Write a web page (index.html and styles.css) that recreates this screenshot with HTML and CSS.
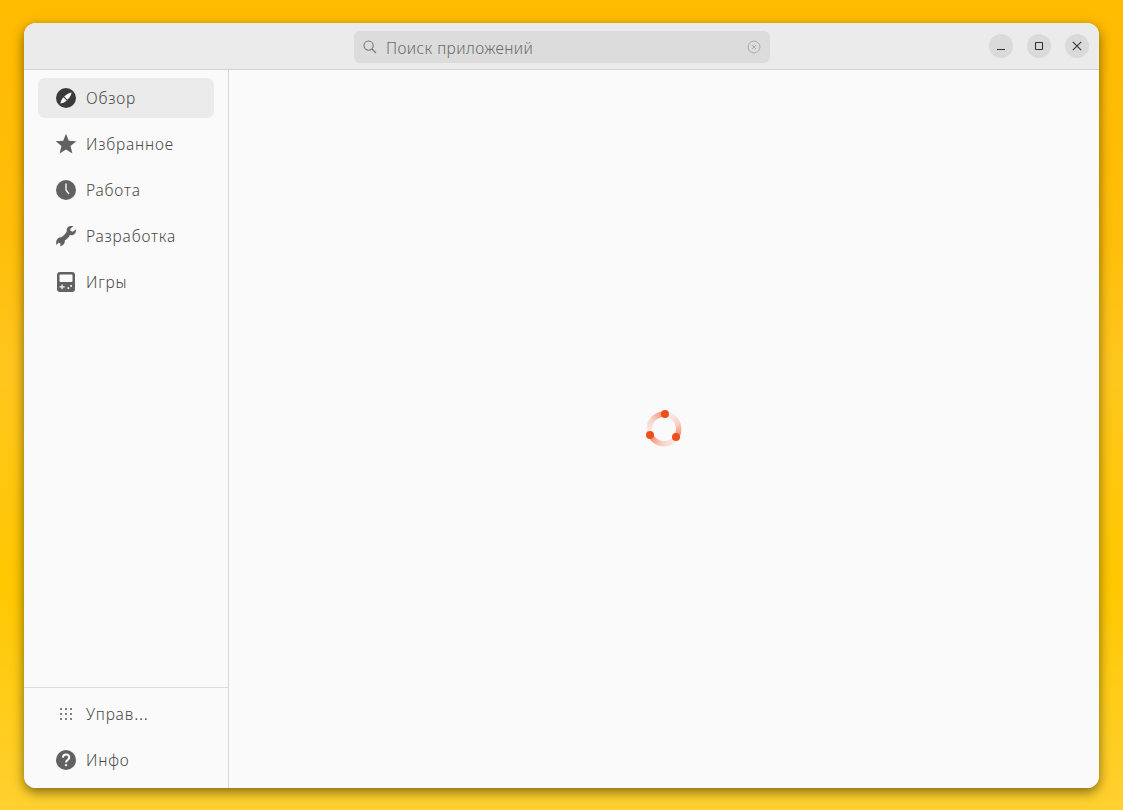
FILE: index.html
```html
<!DOCTYPE html>
<html lang="ru">
<head>
<meta charset="utf-8">
<title>Приложения</title>
<link rel="stylesheet" href="styles.css">
</head>
<body>
<div class="window">
  <header class="titlebar">
    <div class="search">
      <svg class="search-icon" viewBox="0 0 14 14"><circle cx="5.6" cy="5.6" r="4.6"/><path d="M9 9l4 4"/></svg>
      <span class="search-text">Поиск приложений</span>
      <svg class="search-clear" viewBox="0 0 14 14"><circle cx="7" cy="7" r="6"/><path d="M5 5l4 4M9 5l-4 4"/></svg>
    </div>
    <div class="controls">
      <button class="ctl"><svg viewBox="0 0 10 10"><path d="M1 8.5h8"/></svg></button>
      <button class="ctl"><svg viewBox="0 0 10 10"><rect x="1.5" y="1.5" width="7" height="7" rx="0.5"/></svg></button>
      <button class="ctl"><svg viewBox="0 0 10 10"><path d="M.8.8l8.4 8.4M9.2.8L.8 9.2"/></svg></button>
    </div>
  </header>
  <div class="body">
    <aside class="sidebar">
      <nav class="nav">
        <a class="item active">
          <svg class="icon" viewBox="0 0 20 20"><circle class="dark" cx="10" cy="10" r="10"/><path class="cut" d="M15.600 4.400C15 7.500 13.600 9.800 11.400 11.800L8.200 8.600C10.200 6.400 12.500 5 15.600 4.400Z"/><path class="cut" d="M4.400 15.600C5 12.500 6 10.800 7.500 9.300L10.700 12.500C9.200 14 7.500 15 4.400 15.600Z"/></svg>
          <span>Обзор</span>
        </a>
        <a class="item">
          <svg class="icon" viewBox="0 0 20 20"><path class="fill" d="M10 -.3l2.800 7 7.500.5-5.800 4.800 1.900 7.400L10 15.400l-6.400 4 1.900-7.400L-.3 7.200l7.500-.5z"/></svg>
          <span>Избранное</span>
        </a>
        <a class="item">
          <svg class="icon" viewBox="0 0 20 20"><circle class="fill" cx="10" cy="10" r="10"/><path class="hand" d="M10 3.500v6.500l3 4"/></svg>
          <span>Работа</span>
        </a>
        <a class="item">
          <svg class="icon" viewBox="0 0 20 20"><path class="fill" d="M15 0C12 0 10.200 2.500 10.800 5.300C9.800 7.600 7.800 9.700 5.200 11.200C2.500 11 .4 13.300 .2 16.200L.2 19L2.800 16.800L4.600 17.700L4 20.300C6.800 20 9.200 17.700 8.800 14.600C11.300 13.200 12.800 11.400 13.900 9.100C17.100 9.800 20 7.800 20 4.500L20 3.200L16.800 5.800L14.300 4.800L14.500 2.500L17.500 .3C16.800 .1 15.900 0 15 0Z"/></svg>
          <span>Разработка</span>
        </a>
        <a class="item">
          <svg class="icon" viewBox="0 0 20 20"><rect class="fill" x="1" y="0" width="18" height="20" rx="3"/><rect class="cut" x="3.500" y="2.500" width="13" height="7.500" rx="1"/><path class="cut" d="M3.500 14.300h2V12.500h1.200v1.800h2v1.200h-2v1.800H5.500v-1.800h-2zM11.500 15.300h1.700v1.700h-1.700zM14.300 13h1.700v1.700h-1.700z"/></svg>
          <span>Игры</span>
        </a>
      </nav>
      <div class="bottom">
        <a class="item">
          <svg class="icon" viewBox="0 0 20 20"><g class="muted"><rect x="4" y="4" width="2" height="2"/><rect x="9" y="4" width="2" height="2"/><rect x="14" y="4" width="2" height="2"/><rect x="4" y="9" width="2" height="2"/><rect x="9" y="9" width="2" height="2"/><rect x="14" y="9" width="2" height="2"/><rect x="4" y="14" width="2" height="2"/><rect x="9" y="14" width="2" height="2"/><rect x="14" y="14" width="2" height="2"/></g></svg>
          <span>Управ<span class="ell">…</span></span>
        </a>
        <a class="item">
          <svg class="icon" viewBox="0 0 20 20"><circle class="fill" cx="10" cy="10" r="10"/><path class="hand thick" d="M6.900 7.600C7 5.700 8.300 4.600 10.100 4.600c1.800 0 3.100 1.100 3.100 2.800 0 2.600-3.200 2.500-3.200 5.100"/><rect class="cut" x="8.800" y="13.900" width="2.400" height="2.400" rx="1.200"/></svg>
          <span>Инфо</span>
        </a>
      </div>
    </aside>
    <main class="content">
      <div class="spinner">
        <div class="ring"></div>
        <i class="dot dot-a"></i>
        <i class="dot dot-b"></i>
        <i class="dot dot-c"></i>
      </div>
    </main>
  </div>
</div>
</body>
</html>
```

FILE: styles.css
```css
* { box-sizing: border-box; }
html, body { height: 100%; }
body {
  margin: 0;
  padding: 23px 24px 22px;
  background: linear-gradient(180deg, #ffbb00 0%, #ffbe0a 30%, #ffc61e 45%, #ffc800 72%, #ffd030 100%);
  font-family: "Noto Sans", "Open Sans", sans-serif;
  overflow: hidden;
}
.window {
  height: 100%;
  display: flex;
  flex-direction: column;
  border-radius: 12px;
  overflow: hidden;
  background: #fafafa;
  box-shadow: 0 4px 12px rgba(0, 0, 0, .5);
}
.titlebar {
  flex: 0 0 47px;
  position: relative;
  display: flex;
  align-items: center;
  justify-content: flex-end;
  padding: 0 10px 1px 0;
  background: #ebebeb;
  border-bottom: 1px solid #d2d2d2;
}
.search {
  position: absolute;
  left: 330px;
  top: 8px;
  width: 416px;
  height: 32px;
  display: flex;
  align-items: center;
  padding: 0 9px;
  border-radius: 6px;
  background: #dcdcdc;
}
.search-icon { width: 14px; height: 14px; fill: none; stroke: #777; stroke-width: 1.1; }
.search-text { margin-left: 9px; padding-top: 1px; flex: 1; color: #6a6a6a; font-size: 15.5px; font-weight: 300; letter-spacing: .42px; }
.search-clear { width: 14px; height: 14px; fill: none; stroke: #aaa; stroke-width: 1; }
.controls { display: flex; gap: 14px; }
.ctl {
  width: 24px;
  height: 24px;
  padding: 0;
  border: 0;
  border-radius: 50%;
  background: #dadada;
  display: flex;
  align-items: center;
  justify-content: center;
}
.ctl svg { width: 10px; height: 10px; fill: none; stroke: #333; stroke-width: 1.1; }
.body { flex: 1; display: flex; min-height: 0; }
.sidebar {
  flex: 0 0 205px;
  display: flex;
  flex-direction: column;
  justify-content: space-between;
  background: #fafafa;
  border-right: 1px solid #d8d8d8;
}
.nav { display: flex; flex-direction: column; gap: 6px; padding: 8px 14px; }
.bottom {
  display: flex;
  flex-direction: column;
  gap: 6px;
  padding: 6px 14px 8px;
  border-top: 1px solid #dcdcdc;
}
.item {
  width: 176px;
  height: 40px;
  display: flex;
  align-items: center;
  gap: 10px;
  padding: 0 18px;
  border-radius: 7px;
  color: #4a4a4a;
  font-size: 15.5px;
  font-weight: 300;
  letter-spacing: .8px;
}
.ell { display: inline-block; transform-origin: left center; transform: scaleX(1.25); }
.item.active { background: #ebebeb; }
.icon { flex: 0 0 20px; width: 20px; height: 20px; overflow: visible; }
.fill { fill: #616161; }
.muted { fill: #808080; }
.dark { fill: #3a3a3a; }
.cut { fill: #fafafa; }
.hand { fill: none; stroke: #fafafa; stroke-width: 1.4; }
.thick { stroke-width: 2; }
.content { flex: 1; display: flex; align-items: center; justify-content: center; background: #fafafa; }
.spinner { position: relative; width: 36px; height: 36px; }
.ring {
  width: 100%;
  height: 100%;
  border-radius: 50%;
  background: conic-gradient(from 4deg,
    rgba(240, 90, 40, .03) 0deg, rgba(240, 90, 40, .25) 65deg, rgba(240, 90, 40, .72) 118deg,
    rgba(240, 90, 40, .03) 118deg, rgba(240, 90, 40, .25) 185deg, rgba(240, 90, 40, .72) 241deg,
    rgba(240, 90, 40, .03) 241deg, rgba(240, 90, 40, .25) 305deg, rgba(240, 90, 40, .72) 360deg);
  -webkit-mask: radial-gradient(circle, transparent 11.500px, #000 12.500px, #000 17px, transparent 18px);
  mask: radial-gradient(circle, transparent 11.500px, #000 12.500px, #000 17px, transparent 18px);
}
.dot { position: absolute; width: 8px; height: 8px; border-radius: 50%; background: #ee4f1c; }
.dot-a { left: 14.700px; top: -1px; }
.dot-b { left: 26.300px; top: 22px; }
.dot-c { left: 0; top: 20px; }
```
